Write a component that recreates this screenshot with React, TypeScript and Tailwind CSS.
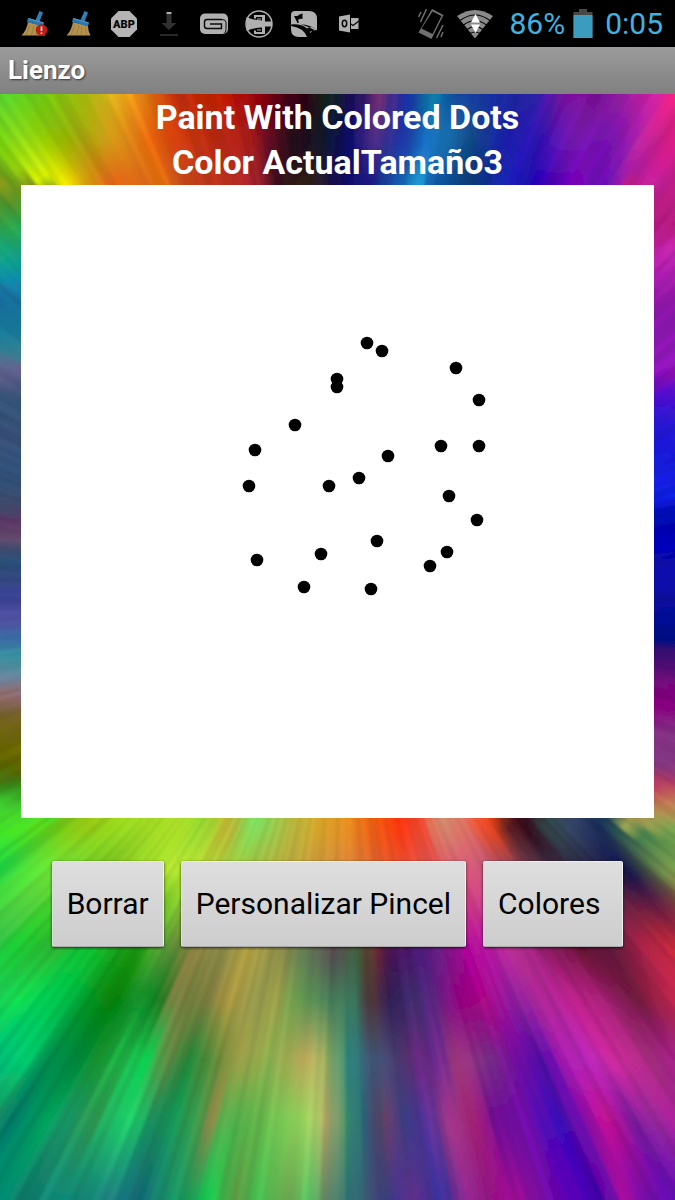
import type { ReactNode } from "react";

type Stop = [number, string];
type Row = [number, string];

const row = (y: number, text: string): Row => [y, text];

const TOP_ROWS: Row[] = [
  row(94, "0 50d030,40 70d010,80 a0b810,110 f0c020,140 e08010,170 c03008,213 c02000,250 a00008,280 500010,300 300010,325 102818,345 181050,365 301860,378 803070,400 1828a0,430 0880a0,450 104898,500 1828a0,540 3020a8,560 8010a0,600 781090,620 9020a0,650 d020a0,675 f02080"),
  row(139, "0 70d010,20 90d818,45 90c800,80 a0a808,110 e0a018,140 e87010,170 d84010,210 b82810,245 a82018,262 700828,290 200818,320 101828,345 080868,375 503088,395 2030a0,420 1860c0,440 1878b0,470 104880,500 1820b0,540 3010b0,570 7818b0,610 7010b0,640 c028a0,675 d81880"),
  row(184, "0 507818,15 80b010,40 d8f000,70 f0e000,90 e09010,115 e86018,160 e07010,190 b84018,225 c03020,255 a02030,275 301018,310 302018,340 100860,370 181880,400 1070b8,415 20a0d0,430 1050a0,470 083870,500 1828b8,535 2000b0,570 8000b8,600 6010b0,640 c020a0,675 c02090"),
];

const BOTTOM_ROWS: Row[] = [
  row(826, "0 40e020,40 58d818,85 90c010,130 a0e020,185 a8d828,205 90d830,230 c8b030,255 78e060,290 b0b840,320 d8a828,345 e09020,375 f06010,400 f83008,425 f05038,440 d09070,470 e06858,490 f04010,505 602020,525 300818,550 304848,570 384868,600 182858,625 286048,650 509050,675 80a850"),
  row(870, "0 18d848,30 50e038,50 70e838,100 70c020,175 b8e830,250 a0c040,330 d09040,400 e05030,475 d85880,550 403040,630 101048,650 405040,675 80a048"),
  row(946, "0 30c048,20 18d030,60 30b030,90 08c030,110 18b020,140 189010,160 58b030,175 608838,200 908040,225 888848,250 b0a040,270 a09848,290 788048,310 607858,335 584050,360 386038,378 702828,395 481058,420 481878,440 602080,465 b000a0,490 b818a0,510 c03098,540 902070,580 681030,610 581838,640 a02048,675 c82838"),
  row(1000, "0 20d058,20 10e050,50 00c850,80 00a838,110 088008,120 007808,140 109830,160 087818,178 908048,190 687838,215 888040,230 b09840,260 909850,275 a0a048,300 68a050,330 488058,355 387058,375 503038,395 302058,420 403070,440 602080,465 980080,490 b00888,515 8820a0,540 a82898,575 c02090,610 a02070,640 681838,675 c82850"),
  row(1060, "0 00b878,25 00d070,50 009050,80 008038,105 189830,130 20c050,150 08d050,170 708040,190 208838,220 688838,245 a8a048,270 88b050,290 a0a850,310 c8b060,330 98b060,350 288078,375 405878,400 484070,420 682878,440 682890,460 a03878,490 783088,520 7008a0,545 4808a8,565 a018b0,590 b828b8,620 c82898,650 a83080,675 a82088"),
  row(1120, "0 188860,20 007868,45 00a058,70 189868,95 309850,115 20c068,135 20d068,155 188858,175 109858,200 409848,215 908848,230 48b850,260 60b048,290 80d058,310 a0d860,330 b8a868,350 308868,370 285878,390 703860,410 384088,430 503098,450 a03888,480 a02070,500 700898,530 7008b0,560 3808b8,585 7808a8,610 c01090,635 701898,660 902898,675 a82098"),
  row(1200, "0 008870,30 107868,60 109080,80 108070,110 208080,140 106878,170 189068,200 18a050,215 10e050,235 609040,260 40c050,290 70a850,310 58c060,330 688868,350 287070,375 405070,400 383088,420 683090,445 303098,470 902890,500 901080,525 a00898,550 7008a8,580 5800b8,605 3800a8,630 b010a0,650 7008a8,675 6008b0"),
];

const LEFT_EDGE =
  "184 889818,205 509028,230 28a850,260 10a088,285 1080a8,300 186c9c,330 147898,355 347c8c,372 686090,400 345478,440 385078,480 305078,510 404868,522 583464,540 604868,560 285078,580 344880,600 384090,620 5050a0,640 3868a0,660 3890a0,680 708098,700 906868,720 706020,750 6c6800,770 586000,790 348c1c,808 40d030,826 48d828";
const RIGHT_EDGE =
  "184 c02088,230 b81880,245 c024a8,280 a41cac,310 8c14ac,340 9018b8,370 9010b8,390 5808c8,420 2818d0,450 1818d0,490 1020e0,520 0008b0,540 0000b8,570 1010a8,600 0808a0,640 001080,652 380870,680 700878,705 880080,730 803080,760 7c347c,785 b83860,802 c08050,826 90a850";

type RGB = [number, number, number];

const toRgb = (hex: string): RGB => {
  const n = parseInt(hex, 16);
  return [n >> 16, (n >> 8) & 255, n & 255];
};

const parse = (text: string) =>
  text.split(",").map((part) => {
    const [at, hex] = part.split(" ");
    return { at: Number(at), rgb: toRgb(hex) };
  });

type Samples = ReturnType<typeof parse>;

const mix = (a: RGB, b: RGB, t: number): RGB => [
  a[0] + (b[0] - a[0]) * t,
  a[1] + (b[1] - a[1]) * t,
  a[2] + (b[2] - a[2]) * t,
];

function along(samples: Samples, v: number): RGB {
  if (v <= samples[0].at) return samples[0].rgb;
  for (let i = 1; i < samples.length; i++) {
    const a = samples[i - 1];
    const b = samples[i];
    if (v <= b.at) return mix(a.rgb, b.rgb, (v - a.at) / (b.at - a.at));
  }
  return samples[samples.length - 1].rgb;
}

const CX = 345;
const CY = 600;
const REACH = 800;
const RAYS = 600;

const top = TOP_ROWS.map(([y, t]) => ({ y, samples: parse(t) }));
const bottom = BOTTOM_ROWS.map(([y, t]) => ({ y, samples: parse(t) }));
const left = parse(LEFT_EDGE);
const right = parse(RIGHT_EDGE);

// Reads a row where the ray through (x, y) crosses it, so streaks stay radial between rows.
function onRay(line: (typeof top)[number], x: number, y: number): RGB {
  const crossing = CX + ((x - CX) * (line.y - CY)) / (y - CY);
  return along(line.samples, x + (crossing - x) * 0.85);
}

function band(rows: typeof top, x: number, y: number): RGB {
  if (y <= rows[0].y) return along(rows[0].samples, x);
  for (let i = 1; i < rows.length; i++) {
    if (y <= rows[i].y) {
      const t = (y - rows[i - 1].y) / (rows[i].y - rows[i - 1].y);
      return mix(onRay(rows[i - 1], x, y), onRay(rows[i], x, y), t);
    }
  }
  return along(rows[rows.length - 1].samples, x);
}

function paint(x: number, y: number): RGB {
  const inside = x > 60 && x < 615;
  if (y < 184 || (inside && y < 450)) return band(top, x, Math.min(y, 184));
  if (y > 826 || (inside && y > 750)) return band(bottom, x, Math.max(y, 826));
  return along(x < 340 ? left : right, y);
}

const noise = (i: number) => {
  const s = Math.sin(i * 127.1 + 11.7) * 43758.5453;
  return (s - Math.floor(s)) * 2 - 1;
};

const rays = Array.from({ length: RAYS }, (_, i) => {
  const angle = (i / RAYS) * Math.PI * 2;
  const next = ((i + 1.3) / RAYS) * Math.PI * 2;
  const cos = Math.cos(angle);
  const sin = Math.sin(angle);
  const shift = noise(i) * 4;
  const light = 1 + noise(i + 900) * 0.06;
  const stops: Stop[] = [];
  for (let r = 220; r <= 720; r += 20) {
    const rgb = paint(CX + cos * r - sin * shift, CY + sin * r + cos * shift);
    const [cr, cg, cb] = rgb.map((c) => Math.min(255, Math.round(c * light)));
    stops.push([r / REACH, `rgb(${cr} ${cg} ${cb})`]);
  }
  const points = [
    [CX, CY],
    [CX + cos * REACH, CY + sin * REACH],
    [CX + Math.cos(next) * REACH, CY + Math.sin(next) * REACH],
  ]
    .map(([x, y]) => `${x.toFixed(1)},${y.toFixed(1)}`)
    .join(" ");
  return { points, stops };
});

function Wallpaper() {
  return (
    <svg
      className="absolute inset-0 h-full w-full"
      viewBox="0 94 675 1106"
      preserveAspectRatio="none"
      aria-hidden="true"
    >
      <defs>
        <filter id="soften" x="-5%" y="-5%" width="110%" height="110%">
          <feGaussianBlur stdDeviation="1.7" />
        </filter>
        {rays.map((ray, i) => (
          <radialGradient key={i} id={`ray${i}`} gradientUnits="userSpaceOnUse" cx={CX} cy={CY} r={REACH}>
            {ray.stops.map(([offset, color], j) => (
              <stop key={j} offset={offset} stopColor={color} />
            ))}
          </radialGradient>
        ))}
      </defs>
      <g filter="url(#soften)">
        {rays.map((ray, i) => (
          <polygon key={i} points={ray.points} fill={`url(#ray${i})`} />
        ))}
      </g>
    </svg>
  );
}

function Broom({ alert = false }: { alert?: boolean }) {
  return (
    <svg className="h-7 w-7" viewBox="0 0 28 28" aria-hidden="true">
      <path d="M8 12 23 16q0 5 2.500 9.500H1.500q5-5 6.500-13.500Z" fill="#b3924f" />
      <path d="M10 15 6 25M14 15.500 11.500 25M17 16.500 16 25M20.500 17l1 8" stroke="#947238" strokeWidth=".7" fill="none" />
      <path d="m8 8 16 4.500-1 4L7 12Z" fill="#2d76ad" />
      <path d="m15.500 10 4-9 3.500 1.500-3.500 9Z" fill="#2f80b8" />
      <path d="m8.500 8.500 15 4.500" stroke="#5a9ccc" fill="none" />
      {alert && (
        <>
          <circle cx="21.500" cy="20" r="5.800" fill="#c01c14" />
          <path d="M21.500 16.500v4.500M21.500 22.500v1.500" stroke="#eee" strokeWidth="1.700" />
        </>
      )}
    </svg>
  );
}

function BlockBadge() {
  return (
    <svg className="h-7 w-7" viewBox="0 0 28 28" aria-hidden="true">
      <path d="M8.500 1h11L27 8.500v11L19.500 27h-11L1 19.500v-11Z" fill="#b4b4b4" />
      <text x="14" y="18" textAnchor="middle" fontFamily="Roboto, sans-serif" fontWeight="900" fontSize="11" fill="#050505">
        ABP
      </text>
    </svg>
  );
}

function Download() {
  return (
    <svg className="h-7 w-7" viewBox="0 0 28 28" aria-hidden="true">
      <path d="M11.500 4h5v9h5L14 20l-7.500-7h5Z" fill="#303030" />
      <path d="M11.500 2h5v2h-5Z" fill="#b0b0b0" />
      <path d="M5 24h18v2H5Z" fill="#282828" />
    </svg>
  );
}

function Gameloft() {
  return (
    <svg className="h-7 w-7" viewBox="0 0 28 28" aria-hidden="true">
      <rect y="3.500" width="28" height="20.500" rx="5" fill="#b0b0b0" />
      <path d="M22 9.500H7q-2.500 0-2.500 2.500v4q0 2.500 2.500 2.500H21.500v-4.500H10" fill="none" stroke="#080808" strokeWidth="1.400" />
      <path d="M22 9.500q4 0 4 3v7q0 3-2 4" fill="none" stroke="#080808" />
    </svg>
  );
}

function Emblem() {
  return (
    <svg className="h-7 w-7" viewBox="0 0 28 28" aria-hidden="true">
      <circle cx="14" cy="14" r="13" fill="#050505" stroke="#b0b0b0" strokeWidth="1.500" />
      <path d="M1.500 7Q7 10 17 10.500v7Q7 18 1.500 21Z" fill="#b0b0b0" />
      <path d="M9 8.500V5H20v6.500h7v5h-7V24H9v-3.500h2V22h6V7h-6v1.500Z" fill="#b0b0b0" />
      <path d="M12 9h4M12 20h4" stroke="#b0b0b0" strokeWidth="1.200" fill="none" />
    </svg>
  );
}

function FlagHill() {
  return (
    <svg className="h-7 w-7" viewBox="0 0 28 28" aria-hidden="true">
      <path d="M1 5q0-4 4-4h14q8 0 8 8v11l-5 1-5 6H9q-8 0-8-8Z" fill="#b0b0b0" />
      <path d="M1 14.500q10-1 16 4 4 4 4.500 8.500h-4.500Q14 18 1 16Z" fill="#050505" />
      <path d="M11 14.500q9 0 16 5.500v2q-6-5-16-7.500ZM17 18l2 4 3-1 5-1-5-3Z" fill="#050505" />
      <path d="m4 6 3.500 7 1.500-.500-1-2.500q2-2 4.500-1V3.500Q9 4 7.500 6Z" fill="#050505" />
    </svg>
  );
}

function Outlook() {
  return (
    <svg className="h-7 w-7" viewBox="0 0 28 28" aria-hidden="true">
      <path d="m4 6.500 11-2v18l-11-2Z" fill="#b0b0b0" />
      <ellipse cx="9.500" cy="13.500" rx="2.200" ry="3.200" fill="none" stroke="#080808" strokeWidth="1.500" />
      <path d="M16 8h7.500v11H16Z" fill="#b0b0b0" />
      <path d="m16 14 2 1.500 6-4.500" fill="none" stroke="#080808" strokeWidth="1.300" />
    </svg>
  );
}

function Vibrate() {
  return (
    <svg className="h-8 w-7" viewBox="0 0 28 32" aria-hidden="true">
      <path d="m15 1 11.500 6-12 24L1.500 24.500Z" fill="#707070" />
      <path d="m15.500 3.500 9 4.600-9 18L4.500 20.500Z" fill="#000" />
      <path d="M3.500 14 9.500 1M1.500 9 4 4M19.500 30 26 17M24 29l2-5" stroke="#707070" strokeWidth="1.500" fill="none" />
    </svg>
  );
}

function Wifi() {
  return (
    <svg className="h-8 w-9" viewBox="0 0 36 32" aria-hidden="true">
      <path d="M0 8Q18-4 36 8L18 30.500Z" fill="#8a8a8a" />
      <path d="M3 12.500Q18 1.500 33 12.500M6.500 17Q18 8.500 29.500 17M10 21.500q8-6 16 0M13 25.500q5-3 10 0" stroke="#000" strokeWidth="1.200" fill="none" />
      <path d="m18.500 6 4.500 8.500h-9ZM18.500 25 14 16.500h9Z" fill="#fff" />
    </svg>
  );
}

function Battery() {
  return (
    <svg className="h-8 w-5" viewBox="0 0 20 32" aria-hidden="true">
      <path d="M6 1h8v3h5.500v26h-19V4H6Z" fill="#484848" />
      <path d="M.5 7h19v23H.5Z" fill="#3c9cc0" />
    </svg>
  );
}

const DOTS = [
  [346, 158], [361, 166], [435, 183], [316, 194], [316, 202], [458, 215], [274, 240],
  [234, 265], [420, 261], [458, 261], [367, 271], [338, 293], [228, 301], [308, 301],
  [428, 311], [456, 335], [356, 356], [300, 369], [426, 367], [236, 375], [409, 381],
  [283, 402], [350, 404],
];

function PadButton({ children, wide = false }: { children: ReactNode; wide?: boolean }) {
  return (
    <button
      type="button"
      className={`h-[86px] rounded-[2px] border border-t-[#f0f0f0] border-r-[#f2f2f2] border-b-[#aaaaaa] border-l-[#dddddd] bg-linear-to-b from-[#dedede] to-[#cdcdcd] text-left text-[30px] leading-9 text-black shadow-[0_1px_3px_rgba(0,0,0,0.7)] ${
        wide ? "pr-[22px] pl-[14px]" : "px-[14px]"
      }`}
    >
      {children}
    </button>
  );
}

export default function App() {
  return (
    <div className="flex min-h-screen flex-col bg-black font-[Roboto,'Noto_Sans',sans-serif]">
      <header>
        <div className="flex h-[47px] items-center justify-between bg-black pr-3 pl-5">
          <div className="flex items-center gap-[17px]">
            <Broom alert />
            <Broom />
            <BlockBadge />
            <Download />
            <Gameloft />
            <Emblem />
            <FlagHill />
            <Outlook />
          </div>
          <div className="flex items-center text-[30px] leading-[47px] text-[#3fb4e0]">
            <Vibrate />
            <span className="ml-3">
              <Wifi />
            </span>
            <span className="ml-4">86%</span>
            <span className="mr-3 ml-2">
              <Battery />
            </span>
            <time>0:05</time>
          </div>
        </div>
        <div className="flex h-[47px] items-center bg-linear-to-b from-[#9b9b9b] to-[#808080] px-2">
          <h1 className="text-[26px] leading-[47px] font-bold text-white [text-shadow:1px_1px_2px_rgba(0,0,0,0.6)]">
            Lienzo
          </h1>
        </div>
      </header>
      <main className="relative flex-1 overflow-hidden">
        <Wallpaper />
        <div className="relative flex flex-col px-[21px]">
          <h2 className="text-center text-[34px] leading-[46px] font-bold text-white">Paint With Colored Dots</h2>
          <p className="text-center text-[34px] leading-[45px] font-bold text-white">
            <span>Color Actual</span>
            <span>Tamaño</span>
            <span>3</span>
          </p>
          <svg className="w-full bg-white" viewBox="0 0 633 633" role="img" aria-label="Lienzo">
            {DOTS.map(([x, y], i) => (
              <circle key={i} cx={x} cy={y} r="6.300" fill="#000" />
            ))}
          </svg>
          <div className="mt-[43px] mb-8 flex justify-center gap-[17px]">
            <PadButton>Borrar</PadButton>
            <PadButton>Personalizar Pincel</PadButton>
            <PadButton wide>Colores</PadButton>
          </div>
        </div>
      </main>
    </div>
  );
}
